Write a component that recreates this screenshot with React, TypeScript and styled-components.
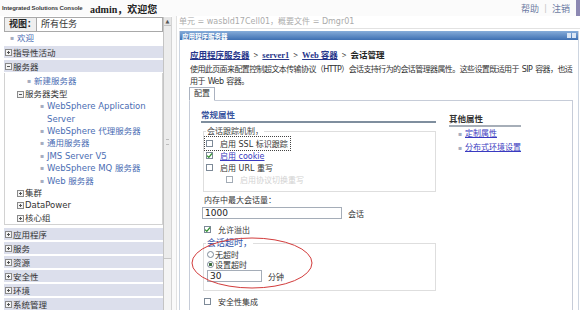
import React from "react";
import styled, { createGlobalStyle } from "styled-components";

const GlobalStyle = createGlobalStyle`
  html, body {
    margin: 0;
    padding: 0;
    background: #ffffff;
  }
  body {
    font-family: "DejaVu Sans", "Noto Sans CJK SC", sans-serif;
    font-size: 8px;
    color: #333333;
  }
`;

const serverTypes = [
  ["WebSphere Application Server"],
  ["WebSphere 代理服务器"],
  ["通用服务器"],
  ["JMS Server V5"],
  ["WebSphere MQ 服务器"],
  ["Web 服务器"],
];

const bottomSections = ["应用程序", "服务", "资源", "安全性", "环境", "系统管理"];

const ExpandIcon = ({ open }: { open?: boolean }) => (
  <svg width="7" height="7" viewBox="0 0 7 7" style={{ marginRight: 1, flex: "none" }}>
    <rect x="0.5" y="0.5" width="6" height="6" fill="#f4f4f4" stroke="#8a8a8a" />
    <line x1="2" y1="3.5" x2="5" y2="3.5" stroke="#555" />
    {!open && <line x1="3.5" y1="2" x2="3.5" y2="5" stroke="#555" />}
  </svg>
);

const Check = ({ checked }: { checked?: boolean }) => (
  <CheckBox>
    {checked && (
      <svg width="7" height="7" viewBox="0 0 7 7">
        <path d="M1 3.6 L2.8 5.3 L6 1.5" fill="none" stroke="#2f8f2f" strokeWidth="1.2" />
      </svg>
    )}
  </CheckBox>
);

const App = () => {
  return (
    <Page>
      <GlobalStyle />
      <Header>
        <Brand>Integrated Solutions Console</Brand>
        <Welcome>admin，欢迎您</Welcome>
        <HeaderLinks>
          <span>帮助</span>
          <Sep>|</Sep>
          <span>注销</span>
        </HeaderLinks>
        <HeaderEdge />
      </Header>

      <Body>
        <Nav>
          <ViewRow>
            <ViewLabel>视图：</ViewLabel>
            <ViewSelect>所有任务</ViewSelect>
          </ViewRow>
          <NavItem indent={6}>
            <Bullet>▪</Bullet>
            <NavLink>欢迎</NavLink>
          </NavItem>
          <Bar>
            <ExpandIcon />
            指导性活动
          </Bar>
          <Bar>
            <ExpandIcon open />
            服务器
          </Bar>
          <ServerBox>
            <NavItem indent={22}>
              <Bullet>▪</Bullet>
              <NavLink>新建服务器</NavLink>
            </NavItem>
            <NavItem indent={12}>
              <ExpandIcon open />
              服务器类型
            </NavItem>
            {serverTypes.map(([label]) => (
              <NavItem indent={35} key={label}>
                <Bullet>▪</Bullet>
                <NavLink>{label}</NavLink>
              </NavItem>
            ))}
            <NavItem indent={12}>
              <ExpandIcon />
              集群
            </NavItem>
            <NavItem indent={12}>
              <ExpandIcon />
              DataPower
            </NavItem>
            <NavItem indent={12}>
              <ExpandIcon />
              核心组
            </NavItem>
          </ServerBox>
          <BarList>
            {bottomSections.map((s) => (
              <Bar key={s}>
                <ExpandIcon />
                {s}
              </Bar>
            ))}
          </BarList>
        </Nav>

        <ScrollBar>
          <ScrollArrow>▲</ScrollArrow>
          <ScrollThumb>
            <Grip />
          </ScrollThumb>
        </ScrollBar>
        <FrameDivider />

        <Main>
          <Context>单元 = wasbld17Cell01，概要文件 = Dmgr01</Context>
          <Portlet>
            <TitleBar>
              <span>应用程序服务器</span>
              <TitleIcons>
                <TitleIcon />
                <TitleIcon />
              </TitleIcons>
            </TitleBar>
            <PortletBody>
              <Breadcrumb>
                <CrumbLink>应用程序服务器</CrumbLink>
                <CrumbSep>&gt;</CrumbSep>
                <CrumbLink>server1</CrumbLink>
                <CrumbSep>&gt;</CrumbSep>
                <CrumbLink>Web 容器</CrumbLink>
                <CrumbSep>&gt;</CrumbSep>
                <span>会话管理</span>
              </Breadcrumb>
              <Description>
                使用此页面来配置控制超文本传输协议（HTTP）会话支持行为的会话管理器属性。这些设置既适用于 SIP 容器，也适用于 Web 容器。
              </Description>
              <Tabs>
                <Tab>配置</Tab>
              </Tabs>
              <TabPanel>
                <LeftColumn>
                  <SectionHead>常规属性</SectionHead>
                  <Group>
                    <Legend>会话跟踪机制，</Legend>
                    <CheckRow>
                      <Focus>
                        <Check />
                        启用 SSL 标识跟踪
                      </Focus>
                    </CheckRow>
                    <CheckRow>
                      <Check checked />
                      <InlineLink>启用 cookie</InlineLink>
                    </CheckRow>
                    <CheckRow>
                      <Check />
                      启用 URL 重写
                    </CheckRow>
                    <CheckRow indent={20} disabled>
                      <Check />
                      启用协议切换重写
                    </CheckRow>
                  </Group>
                  <FieldLabel>内存中最大会话量：</FieldLabel>
                  <InputRow>
                    <TextInput width={140}>1000</TextInput>
                    <Unit>会话</Unit>
                  </InputRow>
                  <CheckRow standalone>
                    <Check checked />
                    允许溢出
                  </CheckRow>
                  <Group tight>
                    <Legend blue>会话超时，</Legend>
                    <RadioRow>
                      <Radio />
                      无超时
                    </RadioRow>
                    <RadioRow>
                      <Radio checked />
                      设置超时
                    </RadioRow>
                    <InputRow>
                      <TextInput width={55}>30</TextInput>
                      <Unit>分钟</Unit>
                    </InputRow>
                  </Group>
                  <CheckRow standalone>
                    <Check />
                    安全性集成
                  </CheckRow>
                </LeftColumn>
                <RightColumn>
                  <OtherHead>其他属性</OtherHead>
                  <LinkItem>
                    <Bullet>▪</Bullet>
                    <InlineLink>定制属性</InlineLink>
                  </LinkItem>
                  <LinkItem>
                    <Bullet>▪</Bullet>
                    <InlineLink>分布式环境设置</InlineLink>
                  </LinkItem>
                </RightColumn>
              </TabPanel>
            </PortletBody>
          </Portlet>
        </Main>
      </Body>

      <Highlight width="124" height="56" viewBox="0 0 124 56">
        <ellipse cx="62" cy="28" rx="60" ry="25" fill="none" stroke="#d23c3c" strokeWidth="1" />
      </Highlight>
    </Page>
  );
};

export default App;

const Page = styled.div`
  position: relative;
  width: 580px;
  height: 310px;
  overflow: hidden;
  background: #ffffff;
`;

const Header = styled.div`
  height: 16px;
  display: flex;
  align-items: center;
  padding-left: 2px;
  background: #fbfbfb;
`;

const Brand = styled.div`
  font-family: "Liberation Sans", sans-serif;
  font-size: 6px;
  font-weight: bold;
  color: #3a3a3a;
  width: 88px;
  letter-spacing: -0.1px;
`;

const Welcome = styled.div`
  font-family: "Liberation Serif", "Noto Sans CJK SC", serif;
  font-weight: bold;
  font-size: 10px;
  color: #222;
`;

const HeaderLinks = styled.div`
  margin-left: auto;
  margin-right: 6px;
  display: flex;
  align-items: center;
  font-size: 9px;
  color: #6d7ca3;
`;

const Sep = styled.span`
  color: #c8c8c8;
  margin: 0 5px;
`;

const HeaderEdge = styled.div`
  width: 4px;
  height: 16px;
  background: #8c88b2;
`;

const Body = styled.div`
  display: flex;
  height: 294px;
`;

const Nav = styled.div`
  width: 163px;
  box-sizing: border-box;
  padding: 1px 0 0 4px;
  font-size: 8.5px;
  color: #333;
`;

const ViewRow = styled.div`
  height: 15px;
  box-sizing: border-box;
  border: 1px solid #a9a9a9;
  display: flex;
  background: #efefef;
`;

const ViewLabel = styled.div`
  width: 31px;
  padding-left: 4px;
  box-sizing: border-box;
  font-family: "Liberation Serif", "Noto Sans CJK SC", serif;
  font-weight: bold;
  font-size: 9px;
  line-height: 13px;
  color: #222;
`;

const ViewSelect = styled.div`
  flex: 1;
  background: #fff;
  border-left: 1px solid #a9a9a9;
  padding-left: 4px;
  font-size: 9px;
  line-height: 13px;
  color: #333;
`;

const NavItem = styled.div<{ indent: number }>`
  display: flex;
  align-items: flex-start;
  padding-left: ${(p) => p.indent}px;
  line-height: 12.4px;
  & > svg {
    margin-top: 3px;
  }
`;

const Bullet = styled.span`
  width: 7px;
  flex: none;
  color: #a7adc0;
  font-size: 6px;
`;

const NavLink = styled.span`
  color: #4a6db3;
`;

const Bar = styled.div`
  height: 12px;
  margin-top: 2px;
  display: flex;
  align-items: center;
  padding-left: 1px;
  background: #dcdfec;
  color: #333;
`;

const ServerBox = styled.div`
  height: 152px;
  box-sizing: border-box;
  border: 1px solid #d2d2d2;
  border-top: none;
  padding-top: 2px;
  margin-top: 1px;
  background: #fff;
`;

const BarList = styled.div`
  margin-top: 3px;
`;

const ScrollBar = styled.div`
  width: 9px;
  margin-top: 1px;
  box-sizing: border-box;
  border-left: 1px solid #c4c4c4;
  border-right: 1px solid #d4d4d4;
  background: #f4f4f4;
  display: flex;
  flex-direction: column;
`;

const ScrollArrow = styled.div`
  height: 8px;
  font-size: 5px;
  line-height: 8px;
  text-align: center;
  color: #555;
  background: #e6e6e6;
  border-bottom: 1px solid #c4c4c4;
`;

const ScrollThumb = styled.div`
  height: 232px;
  background: #ececec;
  border-bottom: 1px solid #c8c8c8;
  display: flex;
  align-items: center;
  justify-content: center;
`;

const Grip = styled.div`
  width: 3px;
  height: 4px;
  border-top: 1px solid #bdbdbd;
  border-bottom: 1px solid #bdbdbd;
`;

const FrameDivider = styled.div`
  width: 4px;
  background: #fafafa;
  border-right: 1px solid #e2e2e2;
`;

const Main = styled.div`
  flex: 1;
  min-width: 0;
  padding-left: 2px;
  background: #ffffff;
`;

const Context = styled.div`
  height: 12px;
  line-height: 12px;
  color: #ababab;
  font-size: 8px;
  border-bottom: 1px solid #e2e2e2;
`;

const Portlet = styled.div`
  margin: 2px 1px 0 0;
  height: 300px;
  border-left: 1px solid #cdd5e0;
  border-right: 1px solid #cdd5e0;
`;

const TitleBar = styled.div`
  height: 9px;
  display: flex;
  align-items: center;
  justify-content: space-between;
  padding: 0 2px;
  background: linear-gradient(#86acd9, #3f70b2);
  color: #ffffff;
  font-size: 6.5px;
  font-weight: bold;
`;

const TitleIcons = styled.div`
  display: flex;
  gap: 1px;
`;

const TitleIcon = styled.div`
  width: 4px;
  height: 5px;
  background: #dbe6f4;
`;

const PortletBody = styled.div`
  padding: 9px 5px 0 9px;
`;

const Breadcrumb = styled.div`
  padding-left: 1px;
  font-family: "Liberation Serif", "Noto Sans CJK SC", serif;
  font-weight: bold;
  font-size: 8.5px;
  line-height: 13px;
  color: #222;
`;

const CrumbLink = styled.span`
  color: #26358a;
  text-decoration: underline;
`;

const CrumbSep = styled.span`
  margin: 0 4px;
`;

const Description = styled.div`
  margin: 2px -3px 0 0;
  padding-left: 1px;
  font-size: 8px;
  letter-spacing: -0.6px;
  word-spacing: 1px;
  line-height: 11.5px;
  color: #333;
`;

const Tabs = styled.div`
  display: flex;
`;

const Tab = styled.div`
  height: 12px;
  line-height: 12px;
  padding: 0 4px;
  border: 1px solid #aab2c0;
  border-bottom: 1px solid #ffffff;
  margin-bottom: -1px;
  background: #ffffff;
  position: relative;
  z-index: 1;
`;

const TabPanel = styled.div`
  display: flex;
  align-items: flex-start;
  height: 230px;
  box-sizing: border-box;
  border: 1px solid #c6ccd8;
  padding: 9px 0 0 11px;
`;

const LeftColumn = styled.div`
  width: 235px;
`;

const RightColumn = styled.div`
  margin: 4px 0 0 13px;
`;

const SectionHead = styled.div`
  font-family: "Liberation Serif", "Noto Sans CJK SC", serif;
  font-weight: bold;
  font-size: 8.5px;
  line-height: 11px;
  color: #3a55a0;
  border-bottom: 2px solid #7f8e9e;
`;

const OtherHead = styled.div`
  width: 72px;
  font-family: "Liberation Serif", "Noto Sans CJK SC", serif;
  font-weight: bold;
  font-size: 8.5px;
  line-height: 11px;
  color: #333;
  border-bottom: 2px solid #a6aeb8;
`;

const LinkItem = styled.div`
  display: flex;
  padding-left: 9px;
  line-height: 12.5px;
  margin-top: 1px;
`;

const InlineLink = styled.span`
  color: #3a3ac0;
  text-decoration: underline;
`;

const Group = styled.fieldset<{ tight?: boolean }>`
  margin: 3px 0 0 2px;
  padding: 0 0 ${(p) => (p.tight ? "8px" : "6px")} 2px;
  border: 1px solid #dedede;
`;

const Legend = styled.legend<{ blue?: boolean }>`
  padding: 0 1px;
  font-size: ${(p) => (p.blue ? "9px" : "8px")};
  line-height: 11px;
  color: ${(p) => (p.blue ? "#3152a8" : "#444")};
`;

const CheckRow = styled.div<{ indent?: number; disabled?: boolean; standalone?: boolean }>`
  display: flex;
  align-items: center;
  height: 12px;
  padding-left: ${(p) => (p.indent || 0) + (p.standalone ? 3 : 0)}px;
  margin-top: ${(p) => (p.standalone ? "4px" : "0")};
  color: ${(p) => (p.disabled ? "#c0c0c0" : "#333")};
  opacity: ${(p) => (p.disabled ? 0.7 : 1)};
`;

const Focus = styled.span`
  display: inline-flex;
  align-items: center;
  outline: 1px dotted #444;
  outline-offset: 1px;
  padding-right: 1px;
`;

const CheckBox = styled.span`
  width: 7px;
  height: 7px;
  box-sizing: border-box;
  border: 1px solid #7d8a98;
  background: #ffffff;
  margin-right: 7px;
  display: inline-flex;
  align-items: center;
  justify-content: center;
  flex: none;

  svg {
    margin: -1px;
  }
`;

const RadioRow = styled.div`
  display: flex;
  align-items: center;
  height: 10px;
  padding-left: 1px;
`;

const Radio = styled.span<{ checked?: boolean }>`
  width: 7px;
  height: 7px;
  box-sizing: border-box;
  border-radius: 50%;
  border: 1px solid #7d8a98;
  margin-right: 1px;
  background: ${(p) =>
    p.checked ? "radial-gradient(circle, #3a6a3a 0 1.4px, #ffffff 1.6px)" : "#ffffff"};
`;

const FieldLabel = styled.div`
  margin: 4px 0 0 3px;
  line-height: 10px;
`;

const InputRow = styled.div`
  display: flex;
  align-items: center;
  margin-top: 1px;
  padding-left: 1px;
`;

const TextInput = styled.div<{ width: number }>`
  width: ${(p) => p.width}px;
  height: 12px;
  box-sizing: border-box;
  border: 1px solid #a5adb8;
  padding-left: 2px;
  font-size: 9px;
  line-height: 10px;
  color: #222;
  background: #ffffff;
`;

const Unit = styled.span`
  margin-left: 6px;
`;

const Highlight = styled.svg`
  position: absolute;
  left: 190px;
  top: 235px;
  pointer-events: none;
`;
